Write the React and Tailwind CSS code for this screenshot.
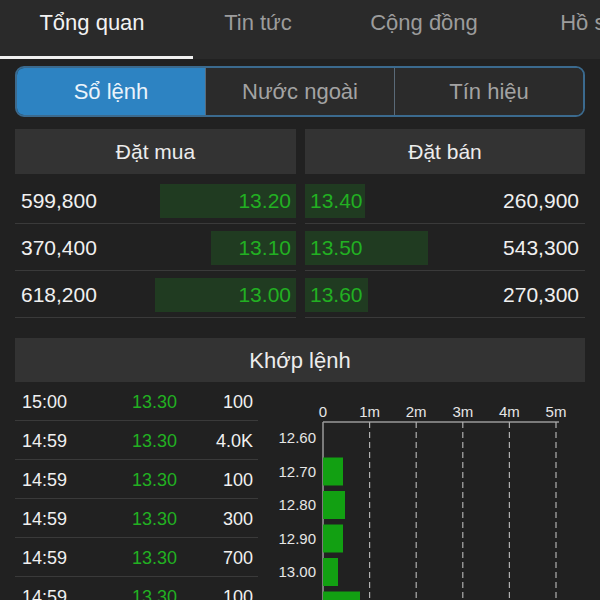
const buys = [
  { vol: "599,800", price: "13.20", w: 136 },
  { vol: "370,400", price: "13.10", w: 85 },
  { vol: "618,200", price: "13.00", w: 141 },
];

const sells = [
  { vol: "260,900", price: "13.40", w: 60 },
  { vol: "543,300", price: "13.50", w: 123 },
  { vol: "270,300", price: "13.60", w: 63 },
];

const trades = [
  ["15:00", "13.30", "100"],
  ["14:59", "13.30", "4.0K"],
  ["14:59", "13.30", "100"],
  ["14:59", "13.30", "300"],
  ["14:59", "13.30", "700"],
  ["14:59", "13.30", "100"],
];

const levels = [
  { p: "12.60", w: 0 },
  { p: "12.70", w: 20 },
  { p: "12.80", w: 22 },
  { p: "12.90", w: 20 },
  { p: "13.00", w: 15 },
  { p: "13.10", w: 37 },
];

function VolumeChart() {
  const x0 = 53;
  const step = 46.6;
  const axisY = 40;
  return (
    <svg width="315" height="218" className="block" style={{ fontFamily: "'Liberation Sans', Arial, sans-serif" }}>
      {[0, 1, 2, 3, 4, 5].map((i) => (
        <text key={i} x={x0 + i * step} y={35} fill="#e6e6e6" fontSize="15" textAnchor="middle">
          {i === 0 ? "0" : `${i}m`}
        </text>
      ))}
      <line x1={x0} y1={axisY} x2={x0 + 5 * step + 3} y2={axisY} stroke="#9a9a9a" strokeWidth="1.5" />
      <line x1={x0} y1={axisY} x2={x0} y2={218} stroke="#9a9a9a" strokeWidth="1.5" />
      {[1, 2, 3, 4, 5].map((i) => (
        <line
          key={i}
          x1={x0 + i * step}
          y1={axisY}
          x2={x0 + i * step}
          y2={218}
          stroke="#b0b0b0"
          strokeWidth="1.2"
          strokeDasharray="6 4"
        />
      ))}
      {levels.map((l, i) => {
        const cy = 56 + i * 33.5;
        return (
          <g key={l.p}>
            <text x={46} y={cy + 5} fill="#e6e6e6" fontSize="15" textAnchor="end">
              {l.p}
            </text>
            {l.w > 0 && <rect x={x0} y={cy - 14} width={l.w} height={28} fill="#12a012" />}
          </g>
        );
      })}
    </svg>
  );
}

export default function App() {
  return (
    <div className="w-[600px] h-[600px] overflow-hidden bg-[#212121] text-white font-['Liberation_Sans',Arial,sans-serif]">
      {/* top tabs */}
      <div className="bg-[#2a2a2a] h-[59px] flex flex-col">
        <div className="flex h-[44px] items-center pl-[9px] text-[22px] whitespace-nowrap">
          <div className="w-[166px] shrink-0 text-center text-[#f2f2f2]">Tổng quan</div>
          <div className="w-[166px] shrink-0 text-center text-[#9c9c9c]">Tin tức</div>
          <div className="w-[166px] shrink-0 text-center text-[#9c9c9c]">Cộng đồng</div>
          <div className="w-[166px] shrink-0 text-center text-[#9c9c9c]">Hồ sơ</div>
        </div>
        <div className="mt-auto h-[3px] w-[193px] bg-[#f0f0f0]" />
      </div>

      {/* segmented control */}
      <div className="mx-[15px] mt-[7px] h-[51px] flex rounded-[9px] border-2 border-[#3b6a8e] overflow-hidden text-[22px]">
        <div className="flex-1 flex items-center justify-center bg-[#2d83c2] text-[#eaf3fb]">Sổ lệnh</div>
        <div className="flex-1 flex items-center justify-center bg-[#2b2b2b] text-[#a3a3a3] border-l border-[#5a6a78]">Nước ngoài</div>
        <div className="flex-1 flex items-center justify-center bg-[#2b2b2b] text-[#a3a3a3] border-l border-[#5a6a78]">Tín hiệu</div>
      </div>

      {/* order book */}
      <div className="mx-[15px] mt-[12px] flex gap-[9px]">
        <div className="w-[281px]">
          <div className="h-[45px] bg-[#333333] flex items-center justify-center text-[21px] text-[#ececec]">Đặt mua</div>
          <div className="mt-[3px]">
            {buys.map((r) => (
              <div key={r.vol} className="h-[47px] flex items-stretch pt-[7px] pb-[5px] border-b border-[#3a3a3a]">
                <div className="flex-1 flex items-center pl-[6px] text-[21px] text-[#f0f0f0]">{r.vol}</div>
                <div className="bg-[#203b21] flex items-center justify-end pr-[5px] text-[21px] text-[#22b022]" style={{ width: r.w }}>
                  {r.price}
                </div>
              </div>
            ))}
          </div>
        </div>
        <div className="w-[280px]">
          <div className="h-[45px] bg-[#333333] flex items-center justify-center text-[21px] text-[#ececec]">Đặt bán</div>
          <div className="mt-[3px]">
            {sells.map((r) => (
              <div key={r.vol} className="h-[47px] flex items-stretch pt-[7px] pb-[5px] border-b border-[#3a3a3a]">
                <div className="bg-[#203b21] flex items-center pl-[5px] text-[21px] text-[#22b022]" style={{ width: r.w }}>
                  {r.price}
                </div>
                <div className="flex-1 flex items-center justify-end pr-[6px] text-[21px] text-[#f0f0f0]">{r.vol}</div>
              </div>
            ))}
          </div>
        </div>
      </div>

      {/* matched orders */}
      <div className="mx-[15px] mt-[20px] h-[44px] bg-[#333333] flex items-center justify-center text-[22px] text-[#ececec]">
        Khớp lệnh
      </div>
      <div className="ml-[15px] flex">
        <div className="w-[243px] shrink-0">
          {trades.map((t, i) => (
            <div key={i} className="h-[39px] flex items-center pt-[2px] border-b border-[#3a3a3a] text-[18px]">
              <div className="w-[110px] pl-[7px] text-[#f0f0f0]">{t[0]}</div>
              <div className="w-[70px] pl-[7px] text-[#22b022]">{t[1]}</div>
              <div className="flex-1 text-right pr-[5px] text-[#f0f0f0]">{t[2]}</div>
            </div>
          ))}
        </div>
        <div className="ml-[12px]">
          <VolumeChart />
        </div>
      </div>
    </div>
  );
}
